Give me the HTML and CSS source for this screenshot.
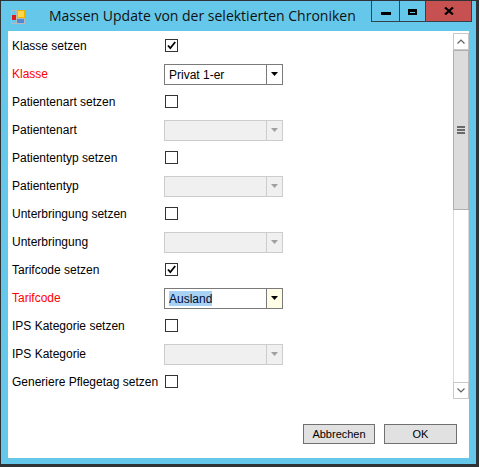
FILE: index.html
```html
<!DOCTYPE html>
<html>
<head>
<meta charset="utf-8">
<link rel="stylesheet" href="styles.css">
</head>
<body>
<div class="window">
  <div class="titlebar">
    <svg class="appicon" width="14" height="14" viewBox="0 0 14 14">
      <rect x="0.5" y="0.5" width="13" height="13" fill="none" stroke="#b9b9b9"/>
      <line x1="5.5" y1="0" x2="5.5" y2="14" stroke="#b9b9b9"/>
      <line x1="0" y1="8.5" x2="14" y2="8.5" stroke="#b9b9b9"/>
      <rect x="6" y="0" width="8" height="8" fill="#f0b400"/>
      <rect x="7" y="1" width="6" height="6" fill="#ffd84a"/>
      <rect x="1" y="5" width="4" height="5" fill="#d62020"/>
      <rect x="6" y="9" width="7" height="4" fill="#4a8ad8"/>
    </svg>
    <span class="title">Massen Update von der selektierten Chroniken</span>
    <div class="caption-buttons">
      <div class="cbtn cbtn-min"><span class="min-bar"></span></div>
      <div class="cbtn cbtn-max"><span class="max-box"></span></div>
      <div class="cbtn cbtn-close">
        <svg width="10" height="8" viewBox="0 0 10 8"><path d="M1 0.5 L9 7.5 M9 0.5 L1 7.5" stroke="#000" stroke-width="2.2"/></svg>
      </div>
    </div>
  </div>
  <div class="client">
    <div class="panel">
      <div class="form">
        <div class="row"><span class="label">Klasse setzen</span><span class="check checked"><svg width="11" height="11" viewBox="0 0 11 11"><path d="M2 5.5 L4.3 8.2 L9.2 2" fill="none" stroke="#000" stroke-width="1.8"/></svg></span></div>
        <div class="row"><span class="label red">Klasse</span><div class="combo"><span class="combo-text">Privat 1-er</span><span class="combo-btn"><svg width="7" height="4" viewBox="0 0 7 4"><path d="M0 0 H7 L3.5 4 Z" fill="#000"/></svg></span></div></div>
        <div class="row"><span class="label">Patientenart setzen</span><span class="check"></span></div>
        <div class="row"><span class="label">Patientenart</span><div class="combo disabled"><span class="combo-text"></span><span class="combo-btn"><svg width="7" height="4" viewBox="0 0 7 4"><path d="M0 0 H7 L3.5 4 Z" fill="#a0a0a0"/></svg></span></div></div>
        <div class="row"><span class="label">Patiententyp setzen</span><span class="check"></span></div>
        <div class="row"><span class="label">Patiententyp</span><div class="combo disabled"><span class="combo-text"></span><span class="combo-btn"><svg width="7" height="4" viewBox="0 0 7 4"><path d="M0 0 H7 L3.5 4 Z" fill="#a0a0a0"/></svg></span></div></div>
        <div class="row"><span class="label">Unterbringung setzen</span><span class="check"></span></div>
        <div class="row"><span class="label">Unterbringung</span><div class="combo disabled"><span class="combo-text"></span><span class="combo-btn"><svg width="7" height="4" viewBox="0 0 7 4"><path d="M0 0 H7 L3.5 4 Z" fill="#a0a0a0"/></svg></span></div></div>
        <div class="row"><span class="label">Tarifcode setzen</span><span class="check checked"><svg width="11" height="11" viewBox="0 0 11 11"><path d="M2 5.5 L4.3 8.2 L9.2 2" fill="none" stroke="#000" stroke-width="1.8"/></svg></span></div>
        <div class="row"><span class="label red">Tarifcode</span><div class="combo focused"><span class="combo-text"><span class="sel">Ausland</span></span><span class="combo-btn"><svg width="7" height="4" viewBox="0 0 7 4"><path d="M0 0 H7 L3.5 4 Z" fill="#000"/></svg></span></div></div>
        <div class="row"><span class="label">IPS Kategorie setzen</span><span class="check"></span></div>
        <div class="row"><span class="label">IPS Kategorie</span><div class="combo disabled"><span class="combo-text"></span><span class="combo-btn"><svg width="7" height="4" viewBox="0 0 7 4"><path d="M0 0 H7 L3.5 4 Z" fill="#a0a0a0"/></svg></span></div></div>
        <div class="row"><span class="label">Generiere Pflegetag setzen</span><span class="check"></span></div>
      </div>
      <div class="scrollbar">
        <div class="sb-arrow"><svg width="8" height="5" viewBox="0 0 8 5"><path d="M0.5 4.5 L4 1 L7.5 4.5" fill="none" stroke="#606060" stroke-width="1.2"/></svg></div>
        <div class="sb-thumb"><span class="grip"></span><span class="grip"></span><span class="grip"></span></div>
        <div class="sb-track"></div>
        <div class="sb-arrow"><svg width="8" height="5" viewBox="0 0 8 5"><path d="M0.5 0.5 L4 4 L7.5 0.5" fill="none" stroke="#606060" stroke-width="1.2"/></svg></div>
      </div>
    </div>
    <div class="footer">
      <button class="btn btn-cancel">Abbrechen</button>
      <button class="btn btn-ok">OK</button>
    </div>
  </div>
</div>
</body>
</html>
```

FILE: styles.css
```css
html, body {
  margin: 0;
  padding: 0;
  background: #ffffff;
}

.window {
  width: 479px;
  height: 467px;
  box-sizing: border-box;
  border-style: solid;
  border-color: #2f3336;
  border-width: 1px 3px 3px 1px;
  background: #65c8ea;
  display: flex;
  flex-direction: column;
}

.titlebar {
  height: 30px;
  display: flex;
  align-items: flex-start;
  flex: none;
}

.appicon {
  margin-left: 10px;
  margin-top: 9px;
  flex: none;
}

.title {
  margin-left: 24px;
  margin-top: 5px;
  font-family: "Open Sans", sans-serif;
  font-size: 14px;
  line-height: 20px;
  color: #111111;
  white-space: nowrap;
}

.caption-buttons {
  margin-left: auto;
  margin-right: 4px;
  display: flex;
  height: 21px;
  border: 1px solid #35414a;
  border-top: none;
  box-sizing: border-box;
}

.cbtn {
  display: flex;
  align-items: center;
  justify-content: center;
  height: 100%;
}

.cbtn-min {
  width: 27px;
  border-right: 1px solid #35414a;
}

.cbtn-max {
  width: 25px;
  border-right: 1px solid #35414a;
}

.cbtn-close {
  width: 45px;
  background: #c75050;
}

.min-bar {
  width: 10px;
  height: 3px;
  background: #000;
  margin-top: 5px;
}

.max-box {
  width: 9px;
  height: 6px;
  box-sizing: border-box;
  border: 2px solid #000;
  border-top-width: 3px;
  margin-top: 1px;
}

.client {
  margin: 0 7px 6px 7px;
  flex: 1;
  background: #ffffff;
  display: flex;
  flex-direction: column;
}

.panel {
  height: 369px;
  display: flex;
  flex: none;
}

.form {
  flex: 1;
  padding-left: 4px;
  font-family: "Liberation Sans", Arial, sans-serif;
  font-size: 12px;
  color: #000;
}

.row {
  height: 28px;
  display: flex;
  align-items: center;
}

.label {
  width: 152px;
  flex: none;
  white-space: nowrap;
  padding-top: 2px;
}

.label.red {
  color: #ff0000;
}

.check {
  width: 13px;
  height: 13px;
  box-sizing: border-box;
  border: 1px solid #333333;
  background: #fff;
  margin-left: 1px;
  margin-top: 1px;
  display: flex;
  align-items: center;
  justify-content: center;
}

.combo {
  width: 119px;
  height: 21px;
  box-sizing: border-box;
  border: 1px solid #7a7a7a;
  background: #fff;
  display: flex;
  margin-top: 2px;
}

.combo-text {
  flex: 1;
  padding-left: 4px;
  line-height: 19px;
  padding-top: 1px;
  white-space: nowrap;
}

.combo-btn {
  width: 15px;
  border-left: 1px solid #7a7a7a;
  display: flex;
  align-items: center;
  justify-content: center;
}

.combo.disabled {
  background: #f0f0f0;
  border-color: #cccccc;
}

.combo.disabled .combo-btn {
  border-left-color: #cccccc;
}

.combo.focused .combo-btn {
  background: #fffde6;
}

.sel {
  background: #a9d1f3;
  color: #000a30;
  padding: 1px 0 0 0;
}

.scrollbar {
  width: 16px;
  margin-top: 2px;
  margin-bottom: 1px;
  display: flex;
  flex-direction: column;
  flex: none;
}

.sb-arrow {
  height: 17px;
  box-sizing: border-box;
  border: 1px solid #c8c8c8;
  display: flex;
  align-items: center;
  justify-content: center;
  background: #fff;
  flex: none;
}

.sb-thumb {
  height: 160px;
  box-sizing: border-box;
  border: 1px solid #b0b0b0;
  background: #dcdcdc;
  display: flex;
  flex-direction: column;
  align-items: center;
  justify-content: center;
  gap: 1px;
  flex: none;
}

.grip {
  width: 8px;
  height: 2px;
  background: #6a6a6a;
}

.sb-track {
  flex: 1;
  border-left: 1px solid #dadada;
  border-right: 1px solid #dadada;
}

.footer {
  display: flex;
  justify-content: flex-end;
  gap: 9px;
  padding-top: 24px;
  padding-right: 12px;
}

.btn {
  height: 20px;
  box-sizing: border-box;
  border: 1px solid #707070;
  background: #e1e1e1;
  font-family: "Liberation Sans", Arial, sans-serif;
  font-size: 11px;
  color: #000;
  padding: 0;
  margin: 0;
}

.btn-cancel {
  width: 72px;
}

.btn-ok {
  width: 73px;
}
```
